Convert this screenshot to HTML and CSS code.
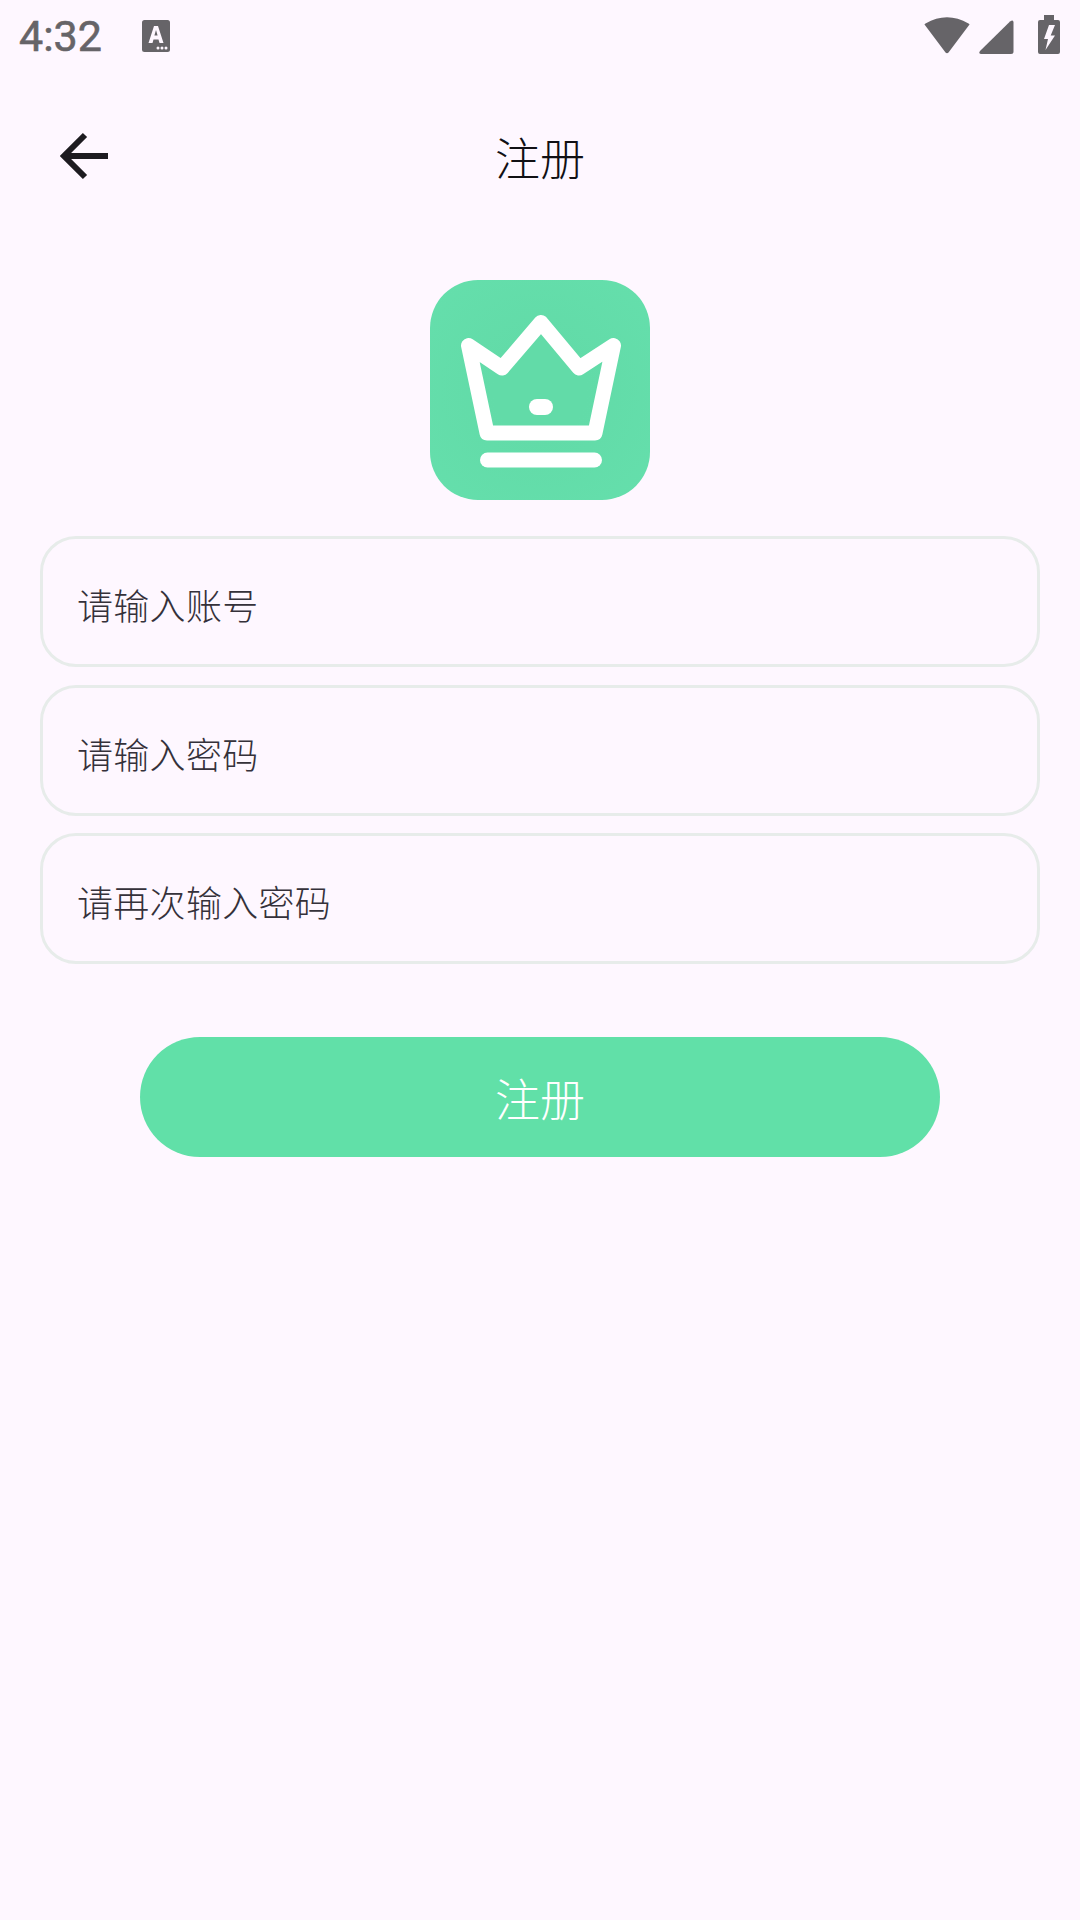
FILE: index.html
```html
<!DOCTYPE html>
<html lang="zh-CN">
<head>
    <meta charset="UTF-8">
    <meta name="viewport" content="width=device-width, initial-scale=1.0">
    <title>注册</title>
    <link rel="stylesheet" href="styles.css">
</head>
<body>
    <div class="status-bar">
        <span class="status-time">4:32</span>
        <svg class="status-app" width="28" height="32" viewBox="0 0 28 32">
            <rect width="28" height="32" rx="2.5" fill="#666468"/>
            <path d="M6.500 23 L12 6 H16 L21.500 23 H17.500 L16.500 19.500 H11.500 L10.500 23 Z M12.400 15.500 H15.600 L14 10 Z" fill="#fef7ff" fill-rule="evenodd"/>
            <circle cx="16" cy="28" r="1.5" fill="#fef7ff"/>
            <circle cx="20" cy="28" r="1.5" fill="#fef7ff"/>
            <circle cx="24" cy="28" r="1.5" fill="#fef7ff"/>
        </svg>
        <div class="status-icons">
            <svg width="46" height="37" viewBox="0 0 46 37">
                <path d="M0.500 7.500 Q0.500 7 1.500 6.500 Q23 -6 44.500 6.500 Q45.500 7 45.500 7.500 L24.500 35.500 Q23 37 21.500 35.500 Z" fill="#666468"/>
            </svg>
            <svg width="35" height="34" viewBox="0 0 35 34">
                <path d="M1 31 L31 1.500 Q34.500 -1 34.500 2.500 V31.500 Q34.500 34 32 34 H2.500 Q-1 34 1 31 Z" fill="#666468"/>
            </svg>
            <svg class="battery" width="22" height="39" viewBox="0 0 22 39">
                <path d="M6 0 H16 V5 H20 Q22 5 22 7 V37 Q22 39 20 39 H2 Q0 39 0 37 V7 Q0 5 2 5 H6 Z" fill="#666468"/>
                <path d="M11 10 H17 L12.700 20.500 H17 L7.500 35 L10 24 H6 Z" fill="#fef7ff"/>
            </svg>
        </div>
    </div>

    <div class="toolbar">
        <svg class="back" width="50" height="48" viewBox="0 0 50 48">
            <path d="M48 24 H5 M25 3 L4 24 L25 45" fill="none" stroke="#1d1b20" stroke-width="6"/>
        </svg>
        <h1 class="title">注册</h1>
    </div>

    <div class="logo">
        <svg width="220" height="220" viewBox="0 0 220 220">
            <path d="M38.500 65.500 L72 88 L111 42.500 L149 88 L183.500 65.500 L165 153 H57 Z" fill="none" stroke="#fff" stroke-width="15" stroke-linejoin="round"/>
            <path d="M57.500 180 H164.500" fill="none" stroke="#fff" stroke-width="15" stroke-linecap="round"/>
            <rect x="99" y="119" width="24" height="16" rx="8" fill="#fff"/>
        </svg>
    </div>

    <div class="form">
        <div class="field">请输入账号</div>
        <div class="field">请输入密码</div>
        <div class="field">请再次输入密码</div>
    </div>

    <button class="submit">注册</button>
</body>
</html>
```

FILE: styles.css
```css
* {
    box-sizing: border-box;
}

body {
    margin: 0;
    height: 1920px;
    overflow: hidden;
    background-color: #fef7ff;
    font-family: "Noto Sans CJK SC", "Noto Sans", sans-serif;
    display: flex;
    flex-direction: column;
    align-items: center;
}

.status-bar {
    width: 100%;
    height: 72px;
    padding: 0 20px 0 19px;
    display: flex;
    align-items: center;
}

.status-time {
    font-family: Roboto, sans-serif;
    font-size: 43px;
    font-weight: 400;
    color: #666468;
    -webkit-text-stroke: 0.6px #666468;
}

.status-app {
    margin-left: 40px;
}

.status-icons {
    margin-left: auto;
    margin-bottom: 4px;
    display: flex;
    align-items: flex-end;
    gap: 9px;
}

.battery {
    margin-left: 15px;
}

.toolbar {
    width: 100%;
    height: 100px;
    margin-top: 34px;
    display: flex;
    align-items: center;
    justify-content: center;
    position: relative;
}

.back {
    position: absolute;
    left: 60px;
    top: 26px;
}

.title {
    margin: 0;
    font-size: 45px;
    font-weight: 300;
    color: #111014;
}

.logo {
    width: 220px;
    height: 220px;
    margin-top: 74px;
    border-radius: 48px;
    background: radial-gradient(circle, #62dba8 30%, #65dfac 100%);
}

.form {
    width: 1000px;
    margin-top: 36px;
    display: flex;
    flex-direction: column;
    gap: 17.5px;
}

.field {
    height: 131px;
    padding: 5px 0 0 34px;
    border: 3px solid #e7ecea;
    border-radius: 36px;
    display: flex;
    align-items: center;
    font-size: 36px;
    font-weight: 300;
    letter-spacing: 0.3px;
    color: #35313a;
}

.submit {
    width: 800px;
    height: 120px;
    margin-top: 73px;
    padding: 0;
    border: none;
    border-radius: 60px;
    background-color: #61e0a8;
    font-family: inherit;
    font-size: 45px;
    font-weight: 300;
    color: #fff;
}
```
